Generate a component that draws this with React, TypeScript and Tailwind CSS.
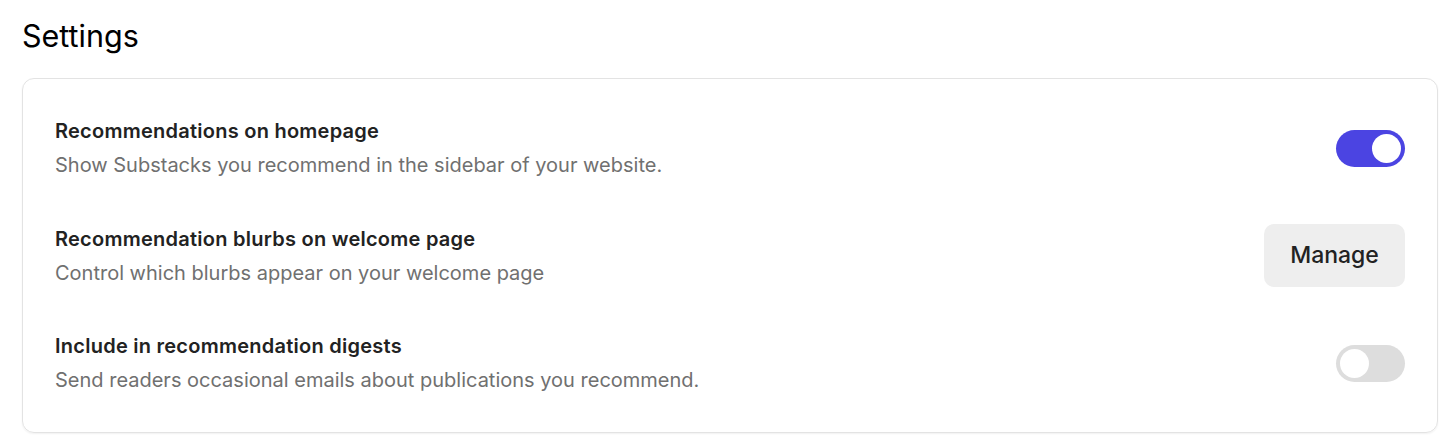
import React from "react";

function Toggle({ on }: { on: boolean }) {
  return (
    <div
      className={
        on
          ? "flex h-[37px] w-[69px] shrink-0 items-center justify-end rounded-full bg-[#4b44e2] p-[4px]"
          : "flex h-[37px] w-[69px] shrink-0 items-center justify-start rounded-full bg-[#dddddd] p-[4px]"
      }
    >
      <div className="h-[29px] w-[29px] rounded-full bg-white" />
    </div>
  );
}

function Row({
  title,
  desc,
  children,
}: {
  title: string;
  desc: string;
  children: React.ReactNode;
}) {
  return (
    <div className="flex items-center justify-between">
      <div className="flex flex-col gap-[6px]">
        <div className="text-[20px] leading-[28px] font-semibold tracking-[0.25px] text-[#222222]">{title}</div>
        <div className="text-[20px] leading-[28px] text-[#707070]">{desc}</div>
      </div>
      {children}
    </div>
  );
}

export default function App() {
  return (
    <div
      className="min-h-[447px] bg-white pl-[22px] pr-[18px] pt-[14px]"
      style={{ fontFamily: "Inter, 'Noto Sans', sans-serif" }}
    >
      <h1 className="text-[30.5px] leading-[44px] font-normal text-black">Settings</h1>
      <div className="mt-[20px] flex flex-col gap-[45px] rounded-[12px] border border-[#e3e3e3] px-[32px] py-[38px] shadow-[0_1px_2px_rgba(0,0,0,0.06)]">
        <Row
          title="Recommendations on homepage"
          desc="Show Substacks you recommend in the sidebar of your website."
        >
          <Toggle on />
        </Row>
        <Row
          title="Recommendation blurbs on welcome page"
          desc="Control which blurbs appear on your welcome page"
        >
          <button className="h-[63px] w-[141px] rounded-[10px] bg-[#eeeeee] text-[23px] font-medium text-[#222222]">
            Manage
          </button>
        </Row>
        <Row
          title="Include in recommendation digests"
          desc="Send readers occasional emails about publications you recommend."
        >
          <Toggle on={false} />
        </Row>
      </div>
    </div>
  );
}
